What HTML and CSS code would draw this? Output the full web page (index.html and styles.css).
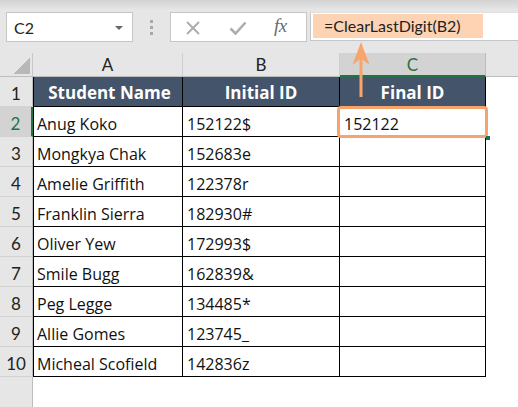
FILE: index.html
```html
<!DOCTYPE html>
<html>
<head>
<meta charset="utf-8">
<link rel="stylesheet" href="styles.css">
</head>
<body>
<div class="app">
  <div class="topband"></div>
  <div class="toolbar">
    <div class="namebox"><span class="ref">C2</span><span class="caret"></span></div>
    <div class="grip"><i></i><i></i><i></i></div>
    <div class="fxbox">
      <svg class="ico-x" width="16" height="14" viewBox="0 0 16 14"><path d="M2 1 L14 13 M14 1 L2 13" stroke="#adadad" stroke-width="2" fill="none"/></svg>
      <svg class="ico-check" width="18" height="14" viewBox="0 0 18 14"><path d="M1.5 7.5 L6.5 12.5 L16.5 1.5" stroke="#adadad" stroke-width="2.6" fill="none"/></svg>
      <span class="fx">fx</span>
    </div>
    <div class="formula"><span class="hl">=ClearLastDigit(B2)</span></div>
  </div>
  <div class="sheet">
    <div class="corner"><span class="tri"></span></div>
    <div class="colh">A</div>
    <div class="colh">B</div>
    <div class="colh sel">C</div>
    <div class="colh last"></div>

    <div class="rowh">1</div>
    <div class="hd ca">Student Name</div>
    <div class="hd">Initial ID</div>
    <div class="hd">Final ID</div>
    <div class="blank"></div>

    <div class="rowh sel">2</div>
    <div class="cell ca">Anug Koko</div>
    <div class="cell">152122$</div>
    <div class="cell">152122</div>
    <div class="blank"></div>

    <div class="rowh">3</div>
    <div class="cell ca">Mongkya Chak</div>
    <div class="cell">152683e</div>
    <div class="cell"></div>
    <div class="blank"></div>

    <div class="rowh">4</div>
    <div class="cell ca">Amelie Griffith</div>
    <div class="cell">122378r</div>
    <div class="cell"></div>
    <div class="blank"></div>

    <div class="rowh">5</div>
    <div class="cell ca">Franklin Sierra</div>
    <div class="cell">182930#</div>
    <div class="cell"></div>
    <div class="blank"></div>

    <div class="rowh">6</div>
    <div class="cell ca">Oliver Yew</div>
    <div class="cell">172993$</div>
    <div class="cell"></div>
    <div class="blank"></div>

    <div class="rowh">7</div>
    <div class="cell ca">Smile Bugg</div>
    <div class="cell">162839&amp;</div>
    <div class="cell"></div>
    <div class="blank"></div>

    <div class="rowh">8</div>
    <div class="cell ca">Peg Legge</div>
    <div class="cell">134485*</div>
    <div class="cell"></div>
    <div class="blank"></div>

    <div class="rowh">9</div>
    <div class="cell ca">Allie Gomes</div>
    <div class="cell">123745_</div>
    <div class="cell"></div>
    <div class="blank"></div>

    <div class="rowh">10</div>
    <div class="cell ca">Micheal Scofield</div>
    <div class="cell">142836z</div>
    <div class="cell"></div>
    <div class="blank"></div>

    <div class="rowh empty"></div>
    <div class="blank span4"></div>
  </div>

  <div class="selbox"><span class="handle"></span></div>
  <svg class="arrow" width="24" height="60" viewBox="0 0 24 60">
    <path d="M12 1 L20.5 24 L12 17.5 L3.5 24 Z" fill="#f7a56d"/>
    <rect x="10.5" y="15" width="3" height="41" fill="#f7a56d"/>
  </svg>
</div>
</body>
</html>
```
FILE: styles.css
```css
* { box-sizing: border-box; }
html, body { margin: 0; padding: 0; }
body {
  width: 518px;
  height: 407px;
  overflow: hidden;
  background: #fff;
  font-family: Lato, "Liberation Sans", sans-serif;
  color: #000;
}
.app {
  position: relative;
  width: 518px;
  height: 407px;
  overflow: hidden;
}
.topband {
  height: 9px;
  background: linear-gradient(#d3d3d3, #e4e4e4);
}
.toolbar {
  height: 44px;
  background: #e6e6e6;
  display: flex;
  align-items: flex-start;
  padding-top: 3px;
}
.namebox {
  margin-left: 6px;
  width: 127px;
  height: 30px;
  background: #fff;
  border: 1px solid #c6c6c6;
  display: flex;
  align-items: center;
  justify-content: space-between;
  padding: 0 9px 0 7px;
  font-size: 16px;
  color: #222;
}
.caret {
  width: 0;
  height: 0;
  border-left: 4px solid transparent;
  border-right: 4px solid transparent;
  border-top: 4px solid #666;
  margin-top: 1px;
}
.grip {
  width: 37px;
  height: 30px;
  display: flex;
  flex-direction: column;
  align-items: center;
  justify-content: center;
  gap: 3px;
}
.grip i {
  display: block;
  width: 3px;
  height: 3px;
  background: #a8a8a8;
}
.fxbox {
  width: 137px;
  height: 30px;
  background: #fff;
  border: 1px solid #c6c6c6;
  display: flex;
  align-items: center;
  padding-left: 14px;
}
.ico-x { margin-top: 1px; }
.ico-check { margin-left: 28px; margin-top: 1px; }
.fx {
  margin-left: 27px;
  font-family: "Liberation Serif", "DejaVu Serif", serif;
  font-style: italic;
  font-size: 19px;
  color: #6b6b6b;
  letter-spacing: -0.5px;
  margin-top: -2px;
}
.formula {
  flex: 1;
  margin-left: 3px;
  height: 29px;
  background: #fff;
  border: 1px solid #c6c6c6;
  border-right: none;
  border-top-color: #e0e0e0;
  padding: 1px 0 0 2px;
}
.hl {
  display: inline-block;
  width: 170px;
  height: 24px;
  line-height: 24px;
  background: #fdd3b4;
  padding-left: 11px;
  font-size: 16px;
  color: #222;
  white-space: nowrap;
}

.sheet {
  display: grid;
  grid-template-columns: 33px 150px 157px 146px 1fr;
  grid-template-rows: 24px repeat(10, 30px) 30px;
}
.corner {
  background: #e6e6e6;
  border-right: 1px solid #c8c8c8;
  border-bottom: 1px solid #bdbdbd;
  position: relative;
}
.tri {
  position: absolute;
  left: 14px;
  top: 5px;
  width: 16px;
  height: 16px;
  background: linear-gradient(to bottom right, transparent 50%, #b8b8b8 50%);
}
.colh {
  background: #e6e6e6;
  border-right: 1px solid #cfcfcf;
  border-bottom: 1px solid #bdbdbd;
  display: flex;
  align-items: center;
  justify-content: center;
  font-size: 17px;
  color: #222;
}
.colh.sel {
  background: #d3d3d3;
  color: #217346;
  border-bottom: 2px solid #217346;
  border-right-color: #bdbdbd;
}
.colh.last { border-right: none; }
.rowh {
  background: #e6e6e6;
  border-right: 1px solid #bdbdbd;
  border-bottom: 1px solid #d2d2d2;
  display: flex;
  align-items: flex-end;
  justify-content: center;
  font-size: 17px;
  line-height: 20px;
  color: #222;
  padding-bottom: 2px;
}
.rowh.sel {
  background: #d3d3d3;
  color: #217346;
  border-right: 2px solid #217346;
}
.rowh.empty { border-bottom: none; border-top: 1px solid #d2d2d2; margin-top: -1px; }
.hd {
  background: #44546a;
  color: #fff;
  font-family: "Open Sans", Lato, sans-serif;
  font-weight: bold;
  font-size: 17px;
  line-height: 20px;
  display: flex;
  align-items: flex-end;
  justify-content: center;
  padding-bottom: 3px;
  border-right: 1px solid #000;
  border-bottom: 1px solid #000;
  white-space: nowrap;
}
.cell {
  font-family: "Open Sans", Lato, sans-serif;
  font-size: 16px;
  line-height: 20px;
  display: flex;
  align-items: flex-end;
  padding: 0 0 2px 4px;
  border-right: 1px solid #000;
  border-bottom: 1px solid #000;
  color: #111;
  white-space: nowrap;
}
.ca { border-left: 1px solid #000; padding-left: 3px; }
.blank { background: #fff; }
.span4 { grid-column: 2 / 6; }

.selbox {
  position: absolute;
  left: 337px;
  top: 106px;
  width: 151px;
  height: 32px;
  border: 3px solid #f6a46b;
  border-radius: 4px;
}
.handle {
  position: absolute;
  right: -5px;
  bottom: -5px;
  width: 4px;
  height: 4px;
  background: #217346;
}
.arrow {
  position: absolute;
  left: 349px;
  top: 41px;
}
```
